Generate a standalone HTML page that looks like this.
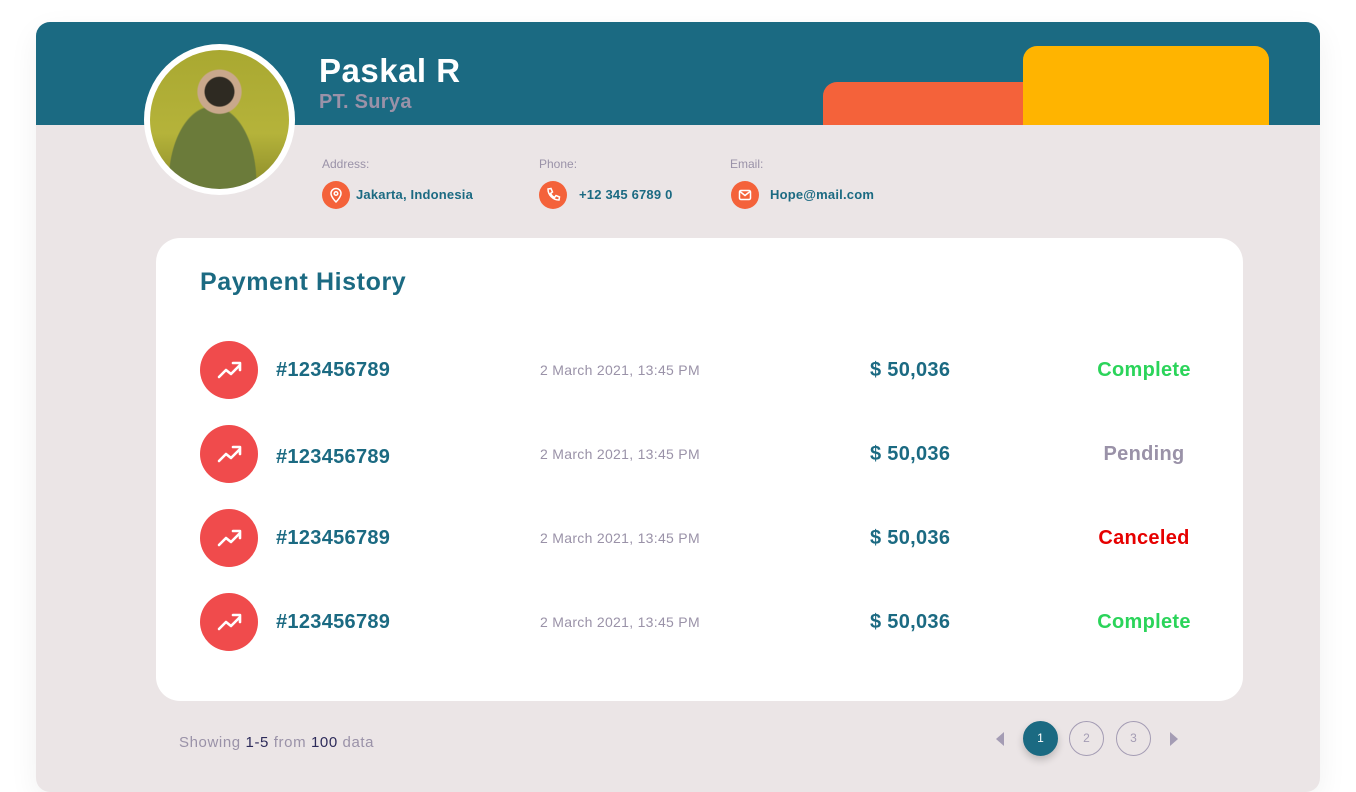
<!DOCTYPE html>
<html><head><style>
*{margin:0;padding:0;box-sizing:border-box}
body{width:1356px;height:779px;background:#fff;font-family:"Liberation Sans",sans-serif;position:relative;overflow:hidden}
.card{position:absolute;left:36px;top:22px;width:1284px;height:770px;background:#ebe5e6;border-radius:14px;overflow:hidden;box-shadow:0 10px 30px rgba(0,0,0,.06)}
.hdr{position:absolute;left:0;top:0;width:1284px;height:103px;background:#1b6a82}
.or{position:absolute;left:787px;top:60px;width:240px;height:43px;background:#f4623a;border-radius:14px 0 0 0}
.ye{position:absolute;left:987px;top:24px;width:246px;height:79px;background:#ffb400;border-radius:14px 14px 0 0}
.av{position:absolute;left:144px;top:44px;width:151px;height:151px;border-radius:50%;background:#fff;padding:6px}
.av div{width:100%;height:100%;border-radius:50%;background:radial-gradient(circle at 50% 30%,#2e2a22 0 12%,#c9a88c 13% 18%,transparent 19%),radial-gradient(ellipse at 45% 95%,#6b7b3a 0 40%,transparent 41%),linear-gradient(#a9a831,#b5b33a 60%,#8b8b2a)}
.abs{position:absolute;white-space:nowrap}
.ic{position:absolute;width:28px;height:28px;border-radius:50%;background:#f4623a}
.lbl{font-size:12px;color:#9a92a8}
.val{font-size:13px;font-weight:bold;color:#1b6a82;letter-spacing:.2px}
.panel{position:absolute;left:156px;top:238px;width:1087px;height:463px;background:#fff;border-radius:24px}
.row .c{position:absolute;left:200px;width:58px;height:58px;border-radius:50%;background:#f04b4c}
.id{font-size:20px;font-weight:bold;color:#1b6a82;letter-spacing:.3px}
.dt{font-size:14px;color:#9a92a8;letter-spacing:.3px}
.am{font-size:20px;font-weight:bold;color:#1b6a82;letter-spacing:.3px}
.st{font-size:20px;font-weight:bold;width:150px;text-align:center;letter-spacing:.3px}
.pg{position:absolute;width:35px;height:35px;border-radius:50%;border:1px solid #a49cb4;color:#a49cb4;font-size:12px;text-align:center;line-height:33px}
</style></head><body>
<div class="card">
<div class="hdr"></div><div class="or"></div><div class="ye"></div>
</div>
<div class="av"><div></div></div>
<div class="abs" style="left:319px;top:52px;font-size:33px;font-weight:bold;color:#fff;letter-spacing:.5px">Paskal R</div>
<div class="abs" style="left:319px;top:91px;font-size:20px;font-weight:bold;color:#9a92a8;letter-spacing:.3px">PT. Surya</div>

<div class="abs lbl" style="left:322px;top:157px">Address:</div>
<div class="abs lbl" style="left:539px;top:157px">Phone:</div>
<div class="abs lbl" style="left:730px;top:157px">Email:</div>
<div class="ic" style="left:322px;top:181px"><svg width="28" height="28" viewBox="0 0 28 28" fill="none" stroke="#fff" stroke-width="1.5"><path d="M14 21s-5-5-5-8.5a5 5 0 0 1 10 0C19 16 14 21 14 21z"/><circle cx="14" cy="12.5" r="1.8"/></svg></div>
<div class="ic" style="left:539px;top:181px"><svg width="28" height="28" viewBox="0 0 28 28" fill="none" stroke="#fff" stroke-width="1.5"><path d="M9 8l3-0.5 1.5 3.5-2 1.5a9 9 0 0 0 4 4l1.5-2 3.5 1.5L20 19c-6 0-11-5-11-11z"/></svg></div>
<div class="ic" style="left:731px;top:181px"><svg width="28" height="28" viewBox="0 0 28 28" fill="none" stroke="#fff" stroke-width="1.5"><rect x="8.5" y="9.5" width="11" height="9" rx="1.5"/><path d="M9 10.5l5 4 5-4"/></svg></div>
<div class="abs val" style="left:356px;top:187px">Jakarta, Indonesia</div>
<div class="abs val" style="left:579px;top:187px">+12 345 6789 0</div>
<div class="abs val" style="left:770px;top:187px">Hope@mail.com</div>

<div class="panel"></div>
<div class="abs" style="left:200px;top:268px;font-size:25px;font-weight:bold;color:#1b6a82;letter-spacing:.6px">Payment History</div>

<div class="row">
<div class="c" style="top:341px"></div><div class="c" style="top:425px"></div><div class="c" style="top:509px"></div><div class="c" style="top:593px"></div>
</div>
<svg class="abs" style="left:0;top:0" width="1356" height="779" fill="none" stroke="#fff" stroke-width="2.6" stroke-linecap="round" stroke-linejoin="round">
<g id="a"><path d="M219 377l7-7 5 4 9-9M233 363h7v7"/></g>
<use href="#a" y="84"/><use href="#a" y="168"/><use href="#a" y="252"/>
</svg>

<div class="abs id" style="left:276px;top:359px">#123456789</div>
<div class="abs id" style="left:276px;top:446px">#123456789</div>
<div class="abs id" style="left:276px;top:527px">#123456789</div>
<div class="abs id" style="left:276px;top:611px">#123456789</div>
<div class="abs dt" style="left:540px;top:362px">2 March 2021, 13:45 PM</div>
<div class="abs dt" style="left:540px;top:446px">2 March 2021, 13:45 PM</div>
<div class="abs dt" style="left:540px;top:530px">2 March 2021, 13:45 PM</div>
<div class="abs dt" style="left:540px;top:614px">2 March 2021, 13:45 PM</div>
<div class="abs am" style="left:870px;top:359px">$ 50,036</div>
<div class="abs am" style="left:870px;top:443px">$ 50,036</div>
<div class="abs am" style="left:870px;top:527px">$ 50,036</div>
<div class="abs am" style="left:870px;top:611px">$ 50,036</div>
<div class="abs st" style="left:1069px;top:359px;color:#2bd45a">Complete</div>
<div class="abs st" style="left:1069px;top:443px;color:#9a92a8">Pending</div>
<div class="abs st" style="left:1069px;top:527px;color:#e60000">Canceled</div>
<div class="abs st" style="left:1069px;top:611px;color:#2bd45a">Complete</div>

<div class="abs" style="left:179px;top:734px;font-size:15px;color:#9a92a8;letter-spacing:.6px">Showing <span style="color:#2d2b5a">1-5</span> from <span style="color:#2d2b5a">100</span> data</div>
<div class="abs" style="left:996px;top:732px;width:0;height:0;border-top:7px solid transparent;border-bottom:7px solid transparent;border-right:8px solid #a49cb4"></div>
<div class="pg" style="left:1023px;top:721px;background:#1b6a82;border-color:#1b6a82;color:#fff;box-shadow:0 4px 8px rgba(0,0,0,.2)">1</div>
<div class="pg" style="left:1069px;top:721px">2</div>
<div class="pg" style="left:1116px;top:721px">3</div>
<div class="abs" style="left:1170px;top:732px;width:0;height:0;border-top:7px solid transparent;border-bottom:7px solid transparent;border-left:8px solid #a49cb4"></div>
</body></html>
